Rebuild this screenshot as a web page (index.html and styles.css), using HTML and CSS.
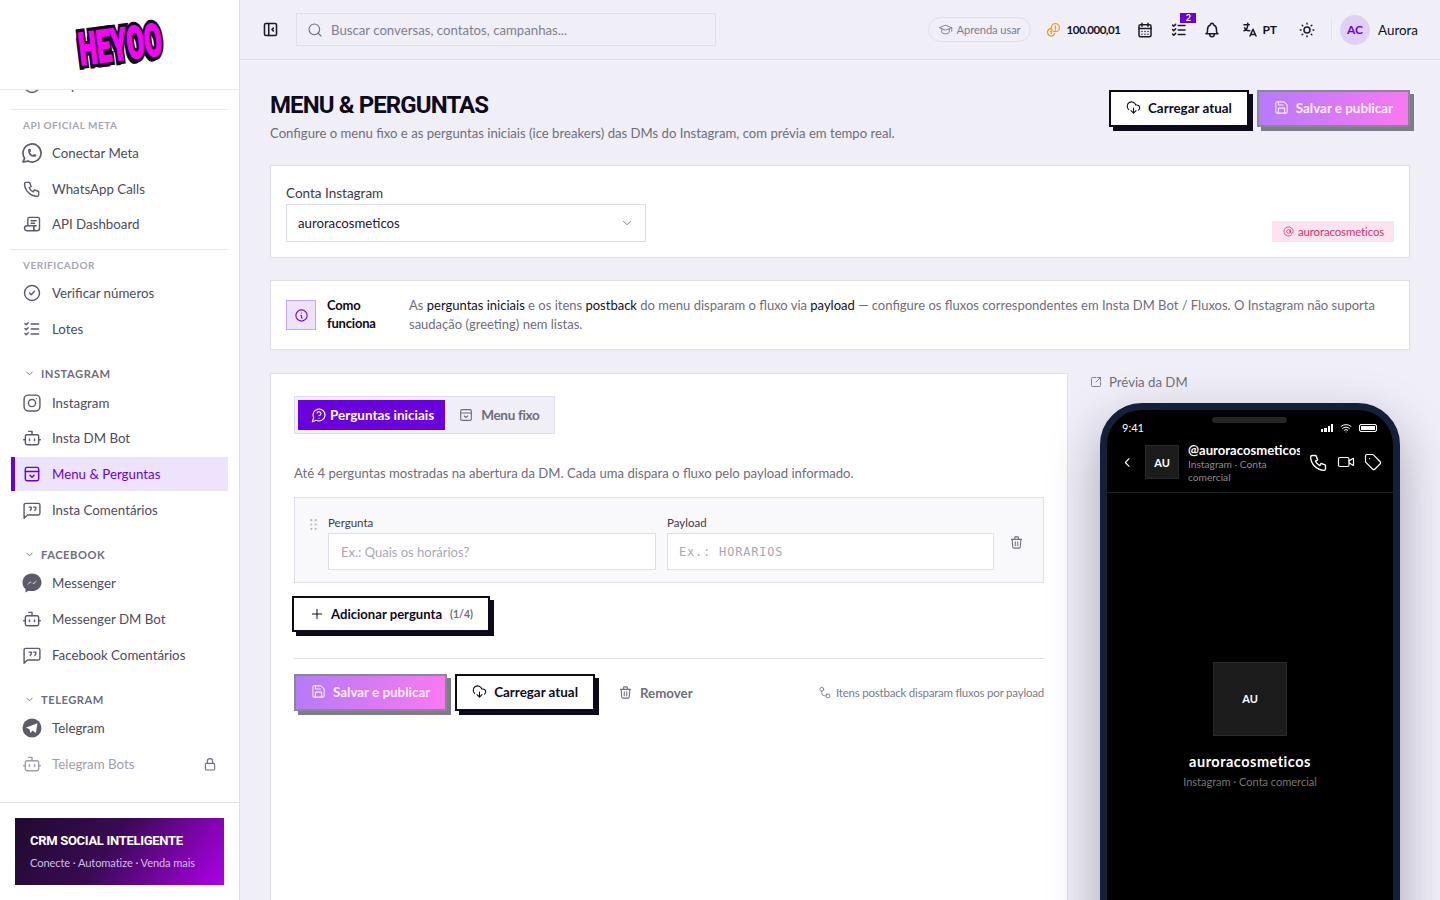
FILE: index.html
```html
<!DOCTYPE html>
<html lang="pt-BR">
<head>
<meta charset="utf-8">
<title>Menu &amp; Perguntas</title>
<link rel="stylesheet" href="styles.css">
</head>
<body>
<svg class="sprite" aria-hidden="true">
  <symbol id="i-circle" viewBox="0 0 24 24"><circle cx="12" cy="12" r="9"/></symbol>
  <symbol id="i-whatsapp" viewBox="2 2 20 20"><path d="M3 21l1.65-3.8a9 9 0 1 1 3.4 2.9l-5.05.9"/><path d="M9 10a.5.5 0 0 0 1 0v-1a.5.5 0 0 0-1 0v1a5 5 0 0 0 5 5h1a.5.5 0 0 0 0-1h-1a.5.5 0 0 0 0 1"/></symbol>
  <symbol id="i-phone" viewBox="0 0 24 24"><path d="M5 4h4l2 5l-2.5 1.5a11 11 0 0 0 5 5l1.5-2.5l5 2v4a2 2 0 0 1-2 2a16 16 0 0 1-15-15a2 2 0 0 1 2-2"/></symbol>
  <symbol id="i-script" viewBox="0 0 24 24"><path d="M17 20h-11a3 3 0 0 1 0-6h11a3 3 0 0 0 0 6h1a3 3 0 0 0 3-3v-11a2 2 0 0 0-2-2h-10a2 2 0 0 0-2 2v8"/><path d="M11 8h6M11 11h4" /></symbol>
  <symbol id="i-check" viewBox="0 0 24 24"><circle cx="12" cy="12" r="9"/><path d="M9 12l2 2l4-4"/></symbol>
  <symbol id="i-list" viewBox="0 0 24 24"><path d="M3.5 5.5l1.5 1.5l2.5-2.5M3.5 11.5l1.5 1.5l2.5-2.5M3.5 17.5l1.5 1.5l2.5-2.5M11 6h9M11 12h9M11 18h9"/></symbol>
  <symbol id="i-instagram" viewBox="0 0 24 24"><rect x="2.500" y="2.500" width="19" height="19" rx="5"/><circle cx="12" cy="12" r="4.300"/><path d="M17.300 6.700v.01"/></symbol>
  <symbol id="i-bot" viewBox="0 0 24 24"><path d="M12 8V4H8"/><rect x="4" y="8" width="16" height="12" rx="2"/><path d="M2 14h2M20 14h2M15 13v2M9 13v2"/></symbol>
  <symbol id="i-menu" viewBox="0 0 24 24"><rect x="4" y="4" width="16" height="16" rx="2"/><path d="M4 9h16M9.5 13.5l2.5 2.5l2.5-2.5"/></symbol>
  <symbol id="i-quote" viewBox="0 0 24 24"><path d="M2.500 22V6a2 2 0 0 1 2-2h15a2 2 0 0 1 2 2v10a2 2 0 0 1-2 2H6.500z"/><path d="M8.500 8.500h2.500v2.500l-1 1.500M14 8.500h2.500v2.500l-1 1.500"/></symbol>
  <symbol id="i-messenger" viewBox="2 2 20 20"><path class="fill" d="M12 2.500C6.500 2.500 2.500 6.400 2.500 11.500c0 2.700 1.100 5 3 6.600V21.500l3.200-1.800c1 .3 2.100.4 3.300.4 5.500 0 9.500-3.900 9.500-8.600S17.500 2.500 12 2.500z"/><path class="cut" d="M6.800 14.300l3.400-3.900l2.700 2.200l4.300-3.400l-3.300 3.900l-2.800-2.200z"/></symbol>
  <symbol id="i-telegram" viewBox="2 2 20 20"><circle class="fill" cx="12" cy="12" r="9.500"/><path class="cut" d="M17.500 7.200L5.800 11.700l3.500 1.300l1.300 4l2-2.500l3.200 2.400z"/></symbol>
  <symbol id="i-lock" viewBox="0 0 24 24"><rect x="5" y="11" width="14" height="10" rx="2"/><path d="M8 11V8a4 4 0 0 1 8 0v3"/></symbol>
  <symbol id="i-chev" viewBox="0 0 24 24"><path d="M6 9l6 6l6-6"/></symbol>
  <symbol id="i-back" viewBox="0 0 24 24"><path d="M15 5l-7 7l7 7"/></symbol>
  <symbol id="i-side" viewBox="0 0 24 24"><rect x="3.500" y="3.500" width="17" height="17" rx="2"/><path d="M9.500 3.500v17M16 10l-2 2l2 2"/></symbol>
  <symbol id="i-search" viewBox="0 0 24 24"><circle cx="11" cy="11" r="8"/><path d="M21 21l-4.300-4.300"/></symbol>
  <symbol id="i-school" viewBox="0 0 24 24"><path d="M22 9l-10-4l-10 4l10 4l10-4v6"/><path d="M6 10.600v5.400a6 3 0 0 0 12 0v-5.400"/></symbol>
  <symbol id="i-coins" viewBox="0 0 24 24"><circle cx="15" cy="9" r="6.500"/><path d="M15 6v5M15 13v.01M7.500 10.500a6 6 0 1 0 6.500 8"/><path d="M7 15.500l1.500-1v4"/></symbol>
  <symbol id="i-cal" viewBox="0 0 24 24"><rect x="4" y="5" width="16" height="16" rx="2"/><path d="M16 3v4M8 3v4M4 10h16M8 14h.01M12 14h.01M16 14h.01M8 17.500h.01M12 17.500h.01M16 17.500h.01"/></symbol>
  <symbol id="i-bell" viewBox="0 0 24 24"><path d="M10 5a2 2 0 1 1 4 0a7 7 0 0 1 4 6v3a4 4 0 0 0 2 3h-16a4 4 0 0 0 2-3v-3a7 7 0 0 1 4-6"/><path d="M9 17v1a3 3 0 0 0 6 0v-1"/></symbol>
  <symbol id="i-lang" viewBox="0 0 24 24"><path d="M4 5h7M9 3v2c0 4.418-2.239 8-5 8M5 9c0 2.144 2.952 3.908 6.700 4M12 20l4-9l4 9M19.100 18h-6.200"/></symbol>
  <symbol id="i-sun" viewBox="0 0 24 24"><circle cx="12" cy="12" r="4"/><path d="M3 12h1m8-9v1m8 8h1m-9 8v1m-6.400-15.400l.7.7m12.100-.7l-.7.7m0 11.400l.7.7m-12.100-.7l-.7.7"/></symbol>
  <symbol id="i-cloud" viewBox="0 0 24 24"><path d="M12 13v8M8 17l4 4l4-4"/><path d="M4.393 15.269A7 7 0 1 1 15.710 8h1.790a4.500 4.500 0 0 1 2.436 8.284"/></symbol>
  <symbol id="i-save" viewBox="0 0 24 24"><path d="M15.200 3a2 2 0 0 1 1.400.6l3.800 3.800a2 2 0 0 1 .6 1.400V19a2 2 0 0 1-2 2H5a2 2 0 0 1-2-2V5a2 2 0 0 1 2-2z"/><path d="M17 21v-7a1 1 0 0 0-1-1H8a1 1 0 0 0-1 1v7M7 3v4a1 1 0 0 0 1 1h7"/></symbol>
  <symbol id="i-at" viewBox="0 0 24 24"><circle cx="12" cy="12" r="4"/><path d="M16 8v5a3 3 0 0 0 6 0v-1a10 10 0 1 0-4 8"/></symbol>
  <symbol id="i-info" viewBox="0 0 24 24"><circle cx="12" cy="12" r="9"/><path d="M12 8h.01M11 12h1v4h1"/></symbol>
  <symbol id="i-ask" viewBox="0 0 24 24"><path d="M7.900 20A9 9 0 1 0 4 16.100L2 22Z"/><path d="M9.090 9a3 3 0 0 1 5.830 1c0 2-3 3-3 3M12 17h.01"/></symbol>
  <symbol id="i-ext" viewBox="0 0 24 24"><path d="M12 3H5a2 2 0 0 0-2 2v14a2 2 0 0 0 2 2h14a2 2 0 0 0 2-2v-7M21 3l-9 9M15 3h6v6"/></symbol>
  <symbol id="i-trash" viewBox="0 0 24 24"><path d="M4 7h16M10 11v6M14 11v6M5 7l1 12a2 2 0 0 0 2 2h8a2 2 0 0 0 2-2l1-12M9 7V4a1 1 0 0 1 1-1h4a1 1 0 0 1 1 1v3"/></symbol>
  <symbol id="i-grip" viewBox="0 0 24 24"><path d="M8 4h.01M16 4h.01M8 12h.01M16 12h.01M8 20h.01M16 20h.01"/></symbol>
  <symbol id="i-plus" viewBox="0 0 24 24"><path d="M12 4v16M4 12h16"/></symbol>
  <symbol id="i-route" viewBox="0 0 24 24"><circle cx="7" cy="6" r="3.500"/><rect x="15" y="15" width="6.500" height="6.500" rx="1.500"/><path d="M7 9.500v3a5 5 0 0 0 5 5.500h3"/></symbol>
  <symbol id="i-video" viewBox="0 0 24 24"><path d="M16 13l5.223 3.482a.5.5 0 0 0 .777-.416V7.870a.5.5 0 0 0-.752-.432L16 10.500"/><rect x="2" y="6" width="14" height="12" rx="2"/></symbol>
  <symbol id="i-tag" viewBox="0 0 24 24"><path d="M12.586 2.586A2 2 0 0 0 11.172 2H4a2 2 0 0 0-2 2v7.172a2 2 0 0 0 .586 1.414l8.704 8.704a2.426 2.426 0 0 0 3.420 0l6.580-6.580a2.426 2.426 0 0 0 0-3.420z"/><path d="M7.500 7.500h.01"/></symbol>
  <symbol id="i-wifi" viewBox="0 0 24 24"><path d="M12 20h.01M2 8.800a15 15 0 0 1 20 0M5 12.900a10 10 0 0 1 14 0M8.500 16.400a5 5 0 0 1 7 0"/></symbol>
</svg>

<div class="app">
  <aside class="sidebar">
    <div class="brand"><span class="logo" data-t="HEYOO">HEYOO</span></div>
    <nav class="nav">
      <div class="nav-inner">
        <div class="group">
          <a class="item"><svg class="ic"><use href="#i-circle"/></svg>Disparos</a>
        </div>
        <div class="group ruled">
          <div class="cap">API OFICIAL META</div>
          <a class="item"><svg class="ic"><use href="#i-whatsapp"/></svg>Conectar Meta</a>
          <a class="item"><svg class="ic"><use href="#i-phone"/></svg>WhatsApp Calls</a>
          <a class="item"><svg class="ic"><use href="#i-script"/></svg>API Dashboard</a>
        </div>
        <div class="group ruled">
          <div class="cap">VERIFICADOR</div>
          <a class="item"><svg class="ic"><use href="#i-check"/></svg>Verificar números</a>
          <a class="item"><svg class="ic"><use href="#i-list"/></svg>Lotes</a>
        </div>
        <div class="group fold">
          <div class="fold-head"><svg class="ic-s"><use href="#i-chev"/></svg>INSTAGRAM</div>
          <a class="item"><svg class="ic"><use href="#i-instagram"/></svg>Instagram</a>
          <a class="item"><svg class="ic"><use href="#i-bot"/></svg>Insta DM Bot</a>
          <a class="item active"><svg class="ic"><use href="#i-menu"/></svg>Menu &amp; Perguntas</a>
          <a class="item"><svg class="ic"><use href="#i-quote"/></svg>Insta Comentários</a>
        </div>
        <div class="group fold">
          <div class="fold-head"><svg class="ic-s"><use href="#i-chev"/></svg>FACEBOOK</div>
          <a class="item"><svg class="ic"><use href="#i-messenger"/></svg>Messenger</a>
          <a class="item"><svg class="ic"><use href="#i-bot"/></svg>Messenger DM Bot</a>
          <a class="item"><svg class="ic"><use href="#i-quote"/></svg>Facebook Comentários</a>
        </div>
        <div class="group fold">
          <div class="fold-head"><svg class="ic-s"><use href="#i-chev"/></svg>TELEGRAM</div>
          <a class="item"><svg class="ic"><use href="#i-telegram"/></svg>Telegram</a>
          <a class="item locked"><svg class="ic"><use href="#i-bot"/></svg>Telegram Bots<svg class="ic-lock"><use href="#i-lock"/></svg></a>
        </div>
      </div>
    </nav>
    <div class="side-foot">
      <div class="promo">
        <strong>CRM SOCIAL INTELIGENTE</strong>
        <span>Conecte · Automatize · Venda mais</span>
      </div>
    </div>
  </aside>

  <div class="workspace">
    <header class="topbar">
      <svg class="ic-top side-toggle"><use href="#i-side"/></svg>
      <div class="search"><svg class="ic-search"><use href="#i-search"/></svg><span>Buscar conversas, contatos, campanhas...</span></div>
      <div class="top-right">
        <div class="learn"><svg class="ic-learn"><use href="#i-school"/></svg>Aprenda usar</div>
        <div class="credits"><svg class="ic-coin"><use href="#i-coins"/></svg>100.000,01</div>
        <svg class="ic-top cal"><use href="#i-cal"/></svg>
        <div class="tasks"><svg class="ic-top"><use href="#i-list"/></svg><span class="badge">2</span></div>
        <svg class="ic-top bell"><use href="#i-bell"/></svg>
        <div class="lang"><svg class="ic-top"><use href="#i-lang"/></svg>PT</div>
        <svg class="ic-top sun"><use href="#i-sun"/></svg>
        <div class="user"><span class="avatar">AC</span>Aurora</div>
      </div>
    </header>

    <main class="page">
      <div class="page-head">
        <div>
          <h1>MENU &amp; PERGUNTAS</h1>
          <p>Configure o menu fixo e as perguntas iniciais (ice breakers) das DMs do Instagram, com prévia em tempo real.</p>
        </div>
        <div class="head-actions">
          <button class="btn btn-light"><svg class="ic-btn"><use href="#i-cloud"/></svg>Carregar atual</button>
          <button class="btn btn-grad"><svg class="ic-btn"><use href="#i-save"/></svg>Salvar e publicar</button>
        </div>
      </div>

      <section class="card account">
        <div class="field">
          <label>Conta Instagram</label>
          <div class="select">auroracosmeticos<svg class="ic-sel"><use href="#i-chev"/></svg></div>
        </div>
        <span class="tagline"><svg class="ic-at"><use href="#i-at"/></svg>auroracosmeticos</span>
      </section>

      <section class="card howto">
        <span class="info-box"><svg class="ic-info"><use href="#i-info"/></svg></span>
        <strong class="how-title">Como funciona</strong>
        <p>As <b>perguntas iniciais</b> e os itens <b>postback</b> do menu disparam o fluxo via <b>payload</b> — configure os fluxos correspondentes em Insta DM Bot / Fluxos. O Instagram não suporta saudação (greeting) nem listas.</p>
      </section>

      <div class="columns">
        <section class="card editor">
          <div class="tabs">
            <button class="tab on"><svg class="ic-tab"><use href="#i-ask"/></svg>Perguntas iniciais</button>
            <button class="tab"><svg class="ic-tab"><use href="#i-menu"/></svg>Menu fixo</button>
          </div>
          <p class="hint">Até 4 perguntas mostradas na abertura da DM. Cada uma dispara o fluxo pelo payload informado.</p>
          <div class="q-row">
            <svg class="ic-grip"><use href="#i-grip"/></svg>
            <div class="q-field">
              <label>Pergunta</label>
              <input class="q-input" placeholder="Ex.: Quais os horários?">
            </div>
            <div class="q-field">
              <label>Payload</label>
              <input class="q-input mono" placeholder="Ex.: HORARIOS">
            </div>
            <svg class="ic-del"><use href="#i-trash"/></svg>
          </div>
          <button class="btn btn-light btn-add"><svg class="ic-btn"><use href="#i-plus"/></svg>Adicionar pergunta<small>(1/4)</small></button>
          <div class="actions">
            <button class="btn btn-grad"><svg class="ic-btn"><use href="#i-save"/></svg>Salvar e publicar</button>
            <button class="btn btn-light"><svg class="ic-btn"><use href="#i-cloud"/></svg>Carregar atual</button>
            <button class="remove"><svg class="ic-btn"><use href="#i-trash"/></svg>Remover</button>
            <span class="note"><svg class="ic-note"><use href="#i-route"/></svg>Itens postback disparam fluxos por payload</span>
          </div>
        </section>

        <aside class="preview">
          <div class="preview-label"><svg class="ic-ext"><use href="#i-ext"/></svg>Prévia da DM</div>
          <div class="phone">
            <div class="screen">
              <div class="notch"></div>
              <div class="status">
                <span>9:41</span>
                <span class="status-icons">
                  <span class="signal"><i></i><i></i><i></i><i></i></span>
                  <svg class="ic-wifi"><use href="#i-wifi"/></svg>
                  <span class="battery"></span>
                </span>
              </div>
              <div class="dm-head">
                <svg class="ic-back"><use href="#i-back"/></svg>
                <span class="dm-av">AU</span>
                <div class="dm-id">
                  <strong>@auroracosmeticos</strong>
                  <span>Instagram · Conta comercial</span>
                </div>
                <div class="dm-tools">
                  <svg class="ic-dm call"><use href="#i-phone"/></svg>
                  <svg class="ic-dm"><use href="#i-video"/></svg>
                  <svg class="ic-dm"><use href="#i-tag"/></svg>
                </div>
              </div>
              <div class="dm-body">
                <span class="big-av">AU</span>
                <strong>auroracosmeticos</strong>
                <span class="big-sub">Instagram · Conta comercial</span>
              </div>
            </div>
          </div>
        </aside>
      </div>
    </main>
  </div>
</div>
</body>
</html>
```

FILE: styles.css
```css
* { box-sizing: border-box; }
html, body { margin: 0; height: 100%; overflow: hidden; }
body { font-family: "Lato", "Noto Sans", sans-serif; font-size: 13.140px; color: #0d0a1c; background: #f0eff8; }
svg { fill: none; stroke: currentColor; stroke-width: 1.7; stroke-linecap: round; stroke-linejoin: round; flex: none; }
.sprite { position: absolute; width: 0; height: 0; }
.fill { fill: currentColor; stroke: none; }
.cut { fill: #fff; stroke: none; }
button { font: inherit; background: none; border: 0; padding: 0; color: inherit; }

.app { display: flex; height: 900px; }

/* sidebar */
.sidebar { width: 240px; flex: none; background: #fff; border-right: 1px solid #dfdeec; display: flex; flex-direction: column; }
.brand { height: 90px; flex: none; border-bottom: 1px solid #e9e8f0; display: flex; align-items: center; justify-content: center; }
.logo { position: relative; display: block; font-family: "Roboto", sans-serif; font-weight: 900; font-size: 45px; line-height: 1; color: #0d0a1c; transform: translate(1px, 0) rotate(-7deg) scaleX(.57); -webkit-text-stroke: 8px #0d0a1c; text-shadow: -2px 2px 0 #0d0a1c, -4px 3px 0 #0d0a1c, -5px 5px 0 #0d0a1c; }
.logo::after { content: attr(data-t); position: absolute; left: 0; top: 0; color: #f505f0; -webkit-text-stroke: 1.5px #f505f0; text-shadow: none; }
.nav { flex: 1; min-height: 0; overflow: hidden; padding: 0 11px; }
.nav-inner { margin-top: -22px; }
.group { display: flex; flex-direction: column; gap: 2px; }
.ruled { margin-top: 7px; border-top: 1px solid #e9e8f0; padding-top: 1px; }
.ruled + .ruled { margin-top: 7.900px; }
.cap { height: 23.500px; padding: 6px 12px 0; font-size: 10px; line-height: 16px; font-weight: 700; letter-spacing: .5px; color: #a7a5b2; }
.item { display: flex; align-items: center; height: 33.670px; padding-left: 11px; font-size: 13.300px; color: #4d4b5c; }
.item .ic { width: 20px; height: 20px; margin-right: 10px; color: #5d5b6a; }
.item.active { background: #ede3fb; color: #6a00dc; box-shadow: inset 4px 0 0 #6a00dc; }
.item.active .ic { color: #6a00dc; }
.item.locked { color: #a09eab; }
.item.locked .ic { color: #a09eab; }
.ic-lock { width: 16px; height: 16px; margin-left: auto; margin-right: 10px; color: #6f6d7c; }
.fold { margin-top: 17px; }
.fold-head { display: flex; align-items: center; height: 21px; padding: 1px 0 0 13px; font-size: 11.200px; font-weight: 700; letter-spacing: .5px; color: #6f6d7f; }
.ic-s { width: 11px; height: 11px; margin-right: 6px; stroke-width: 2; }
.side-foot { height: 98px; flex: none; border-top: 1px solid #dfdeec; padding: 15px 15px 0; }
.promo { height: 67px; padding: 15px 15px 0; background: linear-gradient(125deg, #1f0a2e 0%, #3a0a54 45%, #ae00ea 100%); display: flex; flex-direction: column; }
.promo strong { font-family: "Roboto", sans-serif; font-size: 13px; line-height: 16px; font-weight: 700; letter-spacing: -.3px; color: #fff; white-space: nowrap; }
.promo span { margin-top: 6px; font-size: 11.100px; line-height: 15px; letter-spacing: -.1px; color: #d0bfe3; }

/* top bar */
.workspace { flex: 1; min-width: 0; display: flex; flex-direction: column; }
.topbar { height: 60px; flex: none; display: flex; align-items: center; padding: 0 22px; border-bottom: 1px solid #dfdeea; }
.ic-top { width: 18px; height: 18px; color: #1b1a28; stroke-width: 2; }
.side-toggle { width: 17px; height: 17px; stroke-width: 2.200; }
.search { margin-left: 17px; width: 420px; height: 33px; border: 1px solid #dfdeea; display: flex; align-items: center; padding-left: 10px; font-size: 13.200px; color: #807e8c; }
.ic-search { width: 16px; height: 16px; margin-right: 8px; color: #6e6c7a; stroke-width: 1.600; }
.top-right { margin-left: auto; display: flex; align-items: center; }
.learn { height: 25px; width: 103px; border: 1px solid #e0dfea; border-radius: 13px; display: flex; align-items: center; padding-left: 9px; font-size: 11.200px; color: #807e8c; letter-spacing: -.1px; }
.ic-learn { width: 15px; height: 15px; margin-right: 4px; stroke-width: 1.500; }
.credits { margin-left: 15px; display: flex; align-items: center; font-size: 11.500px; font-weight: 700; letter-spacing: -.5px; color: #12101f; }
.ic-coin { width: 15px; height: 15px; margin-right: 6px; color: #f59f0b; stroke-width: 2; }
.cal { margin-left: 16px; }
.tasks { margin-left: 16px; position: relative; display: flex; }
.badge { position: absolute; left: 10px; top: -8px; width: 16px; height: 10px; background: #6a00dc; color: #fff; font-size: 9px; line-height: 10px; font-weight: 700; text-align: center; }
.bell { margin-left: 15px; }
.lang { margin-left: 20px; display: flex; align-items: center; gap: 3px; font-size: 12px; font-weight: 700; color: #12101f; }
.sun { margin-left: 21px; }
.user { margin-left: 15px; padding-left: 9px; display: flex; align-items: center; gap: 8px; font-size: 13.400px; color: #12101f; position: relative; }
.user::before { content: ""; position: absolute; left: 0; top: 3px; bottom: 4px; width: 1px; background: #e4e3ec; }
.avatar { width: 30px; height: 30px; border-radius: 50%; background: #e0d0f6; color: #6a00dc; font-size: 12px; font-weight: 700; display: flex; align-items: center; justify-content: center; }

/* page */
.page { flex: 1; min-height: 0; overflow: hidden; padding: 30px 30px 0; }
.page-head { display: flex; justify-content: space-between; align-items: flex-start; height: 75px; }
.page-head h1 { margin: 0; font-family: "Roboto", sans-serif; font-size: 24px; line-height: 30px; font-weight: 700; letter-spacing: -.9px; color: #0d0a1c; }
.page-head p { margin: 4px 0 0; line-height: 18px; color: #6f6d7c; }
.head-actions { display: flex; gap: 8px; }
.btn { display: inline-flex; align-items: center; height: 37px; padding: 0 15px 2px; font-size: 13.400px; font-weight: 700; white-space: nowrap; }
.ic-btn { width: 15px; height: 15px; margin-right: 7px; }
.btn-light { background: #fff; border: 2px solid #0d0a1c; box-shadow: 4px 4px 0 #0d0a1c; color: #0d0a1c; }
.btn-grad { background: linear-gradient(100deg, #b47bfa, #fb78f2); border: 2px solid #8a8795; box-shadow: 4px 4px 0 #7f7c8a; color: #fbeefd; }
.card { background: #fff; border: 1px solid #dfdeea; }
.account { height: 93px; display: flex; justify-content: space-between; align-items: flex-end; padding: 0 15px 15px; }
.field label { display: block; line-height: 18px; color: #3c3a4b; font-size: 13.500px; margin-bottom: 2px; }
.select { width: 360px; height: 38px; border: 1px solid #dcdbe8; display: flex; align-items: center; justify-content: space-between; padding: 0 11px; font-size: 13.200px; color: #22202f; }
.ic-sel { width: 14px; height: 14px; color: #6e6c7a; stroke-width: 1.500; }
.tagline { height: 21px; width: 122px; background: #fce3ef; color: #d6336c; display: flex; align-items: center; padding-left: 11px; font-size: 11.400px; letter-spacing: -.1px; }
.ic-at { width: 11px; height: 11px; margin-right: 4px; }
.howto { margin-top: 22px; height: 70px; display: flex; align-items: flex-start; padding: 15px; font-size: 13px; }
.info-box { margin-top: 4px; width: 30px; height: 30px; flex: none; background: #ede3fb; border: 1px solid #c6a6f3; display: flex; align-items: center; justify-content: center; color: #6a00dc; }
.ic-info { width: 15px; height: 15px; }
.how-title { margin-left: 11px; width: 82px; flex: none; line-height: 18px; font-size: 13px; letter-spacing: -.2px; color: #0d0a1c; }
.howto p { margin: 0; line-height: 19px; color: #6f6d7c; }
.howto b { font-weight: 400; color: #12101f; }

.columns { margin-top: 23px; display: grid; grid-template-columns: 798px 1fr; column-gap: 22px; }
.editor { padding: 22px 23px 0; }
.tabs { display: inline-flex; padding: 3px; border: 1px solid #dfdeea; background: #f0eff7; }
.tab { display: inline-flex; align-items: center; height: 30px; padding: 0 11px 0 13px; font-weight: 700; font-size: 13.500px; letter-spacing: -.3px; color: #6f6d7c; }
.tab.on { background: #6a00dc; color: #fff; padding-right: 11px; letter-spacing: 0; }
.ic-tab { width: 16px; height: 16px; margin-right: 7px; }
.tab.on .ic-tab { margin-right: 3px; }
.hint { margin: 30px 0 0; line-height: 18px; color: #6f6d7c; }
.q-row { margin-top: 15px; height: 86px; border: 1px solid #dfdeea; background: #f9f9fc; display: flex; align-items: flex-start; padding: 17px 0 0 12px; }
.ic-grip { width: 13px; height: 13px; margin: 3px 8px 0 0; color: #b6b4c0; stroke-width: 4; }
.q-field { width: 328px; flex: none; margin-right: 11px; }
.q-field + .q-field { width: 327px; }
.q-field label { display: block; font-size: 11.500px; line-height: 16px; color: #3c3a4b; margin-bottom: 2px; }
.q-input { display: block; width: 100%; height: 37px; border: 1px solid #dfdeea; background: #fff; padding: 0 12px; font: 13px "Lato", sans-serif; outline: 0; border-radius: 0; }
.q-input::placeholder { color: #a9a7b3; opacity: 1; }
.q-input.mono { font-family: "DejaVu Sans Mono", "Liberation Mono", monospace; font-size: 12px; letter-spacing: .8px; padding-left: 11px; }
.ic-del { width: 15px; height: 15px; margin: 20px 0 0 4px; color: #6f6d7c; }
.btn-add { margin: 13px 0 0 -2px; height: 36px; padding: 0 15px 0 16px; font-size: 13.100px; }
.btn-add .ic-btn { width: 14px; height: 14px; margin-right: 7px; }
.btn-add small { margin-left: 8px; font-size: 10.500px; font-weight: 700; color: #6f6d7c; }
.actions { margin-top: 26px; padding-top: 15px; border-top: 1px solid #dfdeea; display: flex; align-items: center; gap: 8px; }
.remove { margin-left: 15px; display: inline-flex; align-items: center; font-size: 13.300px; font-weight: 700; color: #6f6d7c; }
.remove .ic-btn { margin-right: 7px; }
.note { margin-left: auto; display: flex; align-items: center; font-size: 11.500px; letter-spacing: -.21px; color: #7c7a88; }
.ic-note { width: 13px; height: 13px; margin-right: 5px; }
.preview-label { display: flex; align-items: center; height: 18px; color: #6f6d7c; font-size: 13.200px; }
.ic-ext { width: 12px; height: 12px; margin-right: 7px; }
.phone { margin: 12px 10px 0; height: 640px; border: 7px solid #12203a; border-radius: 42px; background: #000; box-shadow: 0 20px 50px rgba(20,20,50,.35); overflow: hidden; }
.screen { height: 100%; color: #fff; display: flex; flex-direction: column; position: relative; }
.notch { position: absolute; left: 105px; top: 7px; width: 75px; height: 6px; border-radius: 3px; background: #262626; }
.status { height: 35px; flex: none; padding: 10px 16px 0 15px; display: flex; justify-content: space-between; align-items: flex-start; font-size: 11px; line-height: 16px; }
.status-icons { display: flex; align-items: center; gap: 6px; height: 16px; }
.signal { display: flex; align-items: flex-end; gap: 1px; height: 8px; }
.signal i { display: block; width: 2.250px; background: #fff; }
.signal i:nth-child(1) { height: 3px; }
.signal i:nth-child(2) { height: 4px; }
.signal i:nth-child(3) { height: 6px; }
.signal i:nth-child(4) { height: 8px; }
.ic-wifi { width: 14px; height: 12px; stroke-width: 2; }
.battery { width: 18px; height: 8px; border: 1px solid #fff; border-radius: 2px; background: #fff; box-shadow: inset 0 0 0 1px #000; }
.dm-head { height: 47px; flex: none; padding: 0 11px 0 14px; border-bottom: 1px solid #222; display: flex; align-items: flex-start; box-sizing: content-box; }
.ic-back { width: 13px; height: 13px; margin: 11px 11px 0 0; stroke-width: 2; }
.dm-av { width: 34px; height: 34px; flex: none; background: #1c1c1c; border: 1px solid #2a2a2a; font-size: 11px; font-weight: 700; display: flex; align-items: center; justify-content: center; }
.dm-id { margin-left: 9px; width: 112px; flex: none; overflow: hidden; display: flex; flex-direction: column; margin-top: -3px; }
.dm-id strong { font-size: 13.100px; line-height: 16px; font-weight: 700; white-space: nowrap; }
.dm-id span { font-size: 10.200px; line-height: 13px; color: #8c8c8c; width: 95px; }
.dm-tools { margin-left: 9px; display: flex; gap: 9.500px; margin-top: 8px; }
.ic-dm { width: 18px; height: 18px; stroke-width: 1.600; }
.ic-dm.call { width: 21px; height: 21px; margin: -1.500px; }
.dm-body { flex: 1; display: flex; flex-direction: column; align-items: center; padding-top: 169px; }
.big-av { width: 74px; height: 74px; background: #1c1c1c; border: 1px solid #2a2a2a; font-size: 11px; line-height: 12px; font-weight: 700; display: flex; align-items: center; justify-content: center; }
.dm-body strong { margin-top: 16px; font-size: 14.500px; line-height: 20px; letter-spacing: .5px; font-weight: 700; }
.big-sub { margin-top: 2px; font-size: 11px; line-height: 16px; color: #777; }
```
